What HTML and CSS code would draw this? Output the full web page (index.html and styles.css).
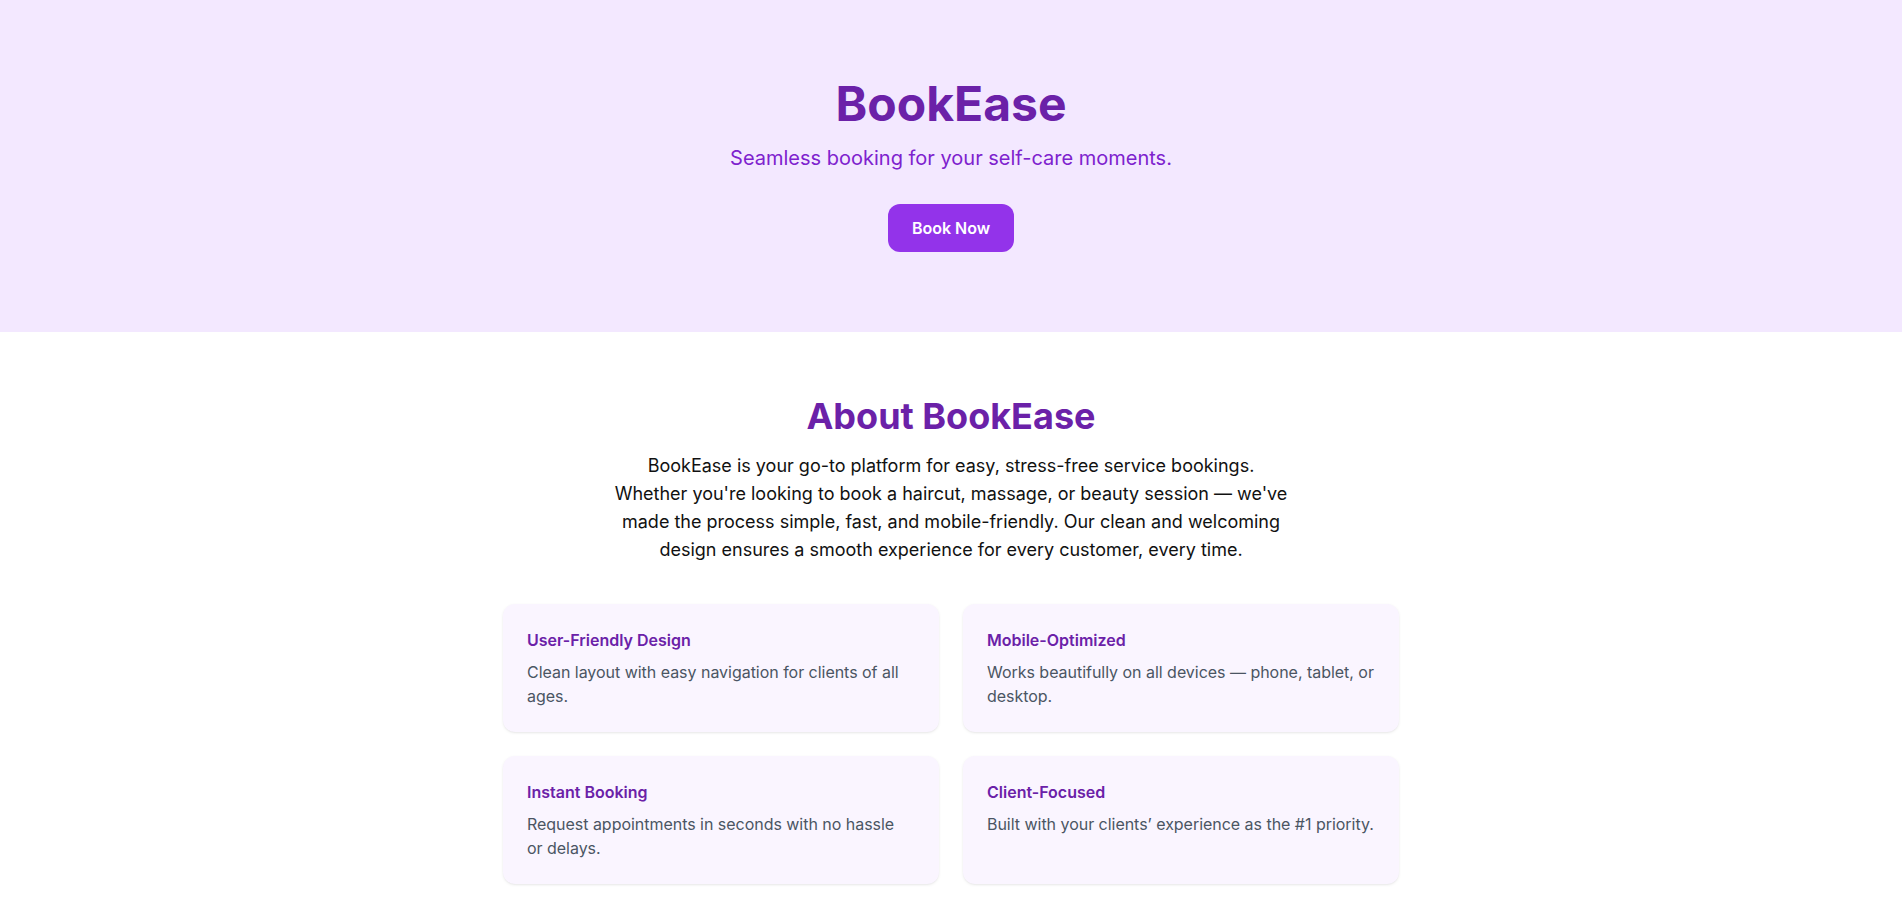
FILE: index.html
```html
<!DOCTYPE html>
<html lang="en">
<head>
<meta charset="utf-8">
<title>BookEase</title>
<link rel="stylesheet" href="styles.css">
</head>
<body>
<header class="hero">
  <h1 class="hero-title">BookEase</h1>
  <p class="hero-sub">Seamless booking for your self-care moments.</p>
  <a class="btn" href="#">Book Now</a>
</header>
<section class="about">
  <h2 class="about-title">About BookEase</h2>
  <p class="about-text">BookEase is your go-to platform for easy, stress-free service bookings. Whether you're looking to book a haircut, massage, or beauty session — we've made the process simple, fast, and mobile-friendly. Our clean and welcoming design ensures a smooth experience for every customer, every time.</p>
  <div class="grid">
    <div class="card">
      <h3 class="card-title">User-Friendly Design</h3>
      <p class="card-text">Clean layout with easy navigation for clients of all ages.</p>
    </div>
    <div class="card">
      <h3 class="card-title">Mobile-Optimized</h3>
      <p class="card-text">Works beautifully on all devices — phone, tablet, or desktop.</p>
    </div>
    <div class="card">
      <h3 class="card-title">Instant Booking</h3>
      <p class="card-text">Request appointments in seconds with no hassle or&nbsp;delays.</p>
    </div>
    <div class="card">
      <h3 class="card-title">Client-Focused</h3>
      <p class="card-text">Built with your clients’ experience as the #1 priority.</p>
    </div>
  </div>
</section>
</body>
</html>
```
FILE: styles.css
```css
* { box-sizing: border-box; }
html, body { margin: 0; padding: 0; }
body {
  font-family: Inter, "Noto Sans", "Liberation Sans", sans-serif;
  background: #ffffff;
  color: #111111;
}
h1, h2, h3, p { margin: 0; }

.hero {
  background: #f3e8ff;
  padding: 80px 16px;
  display: flex;
  flex-direction: column;
  align-items: center;
  text-align: center;
}
.hero-title {
  font-size: 48px;
  line-height: 48px;
  font-weight: 700;
  color: #6b21a8;
  margin-bottom: 16px;
}
.hero-sub {
  font-size: 20px;
  line-height: 28px;
  color: #7e22ce;
  margin-bottom: 32px;
}
.btn {
  display: inline-block;
  background: #9333ea;
  color: #ffffff;
  font-size: 16px;
  line-height: 24px;
  font-weight: 600;
  padding: 12px 24px;
  border-radius: 12px;
  text-decoration: none;
}

.about {
  padding: 64px 16px;
  display: flex;
  flex-direction: column;
  align-items: center;
  text-align: center;
}
.about-title {
  font-size: 36px;
  line-height: 40px;
  font-weight: 700;
  color: #6b21a8;
  margin-bottom: 16px;
}
.about-text {
  max-width: 674px;
  font-size: 18px;
  line-height: 28px;
  color: #111111;
  margin-bottom: 40px;
}
.grid {
  width: 100%;
  max-width: 896px;
  display: grid;
  grid-template-columns: 1fr 1fr;
  gap: 24px;
  text-align: left;
}
.card {
  background: #faf5ff;
  border-radius: 12px;
  padding: 24px;
  box-shadow: 0 1px 3px rgba(0,0,0,0.08), 0 1px 2px -1px rgba(0,0,0,0.08);
}
.card-title {
  font-size: 16px;
  line-height: 24px;
  font-weight: 600;
  color: #6b21a8;
  margin-bottom: 8px;
}
.card-text {
  font-size: 16px;
  line-height: 24px;
  letter-spacing: -0.03px;
  color: #4b5563;
}
```
